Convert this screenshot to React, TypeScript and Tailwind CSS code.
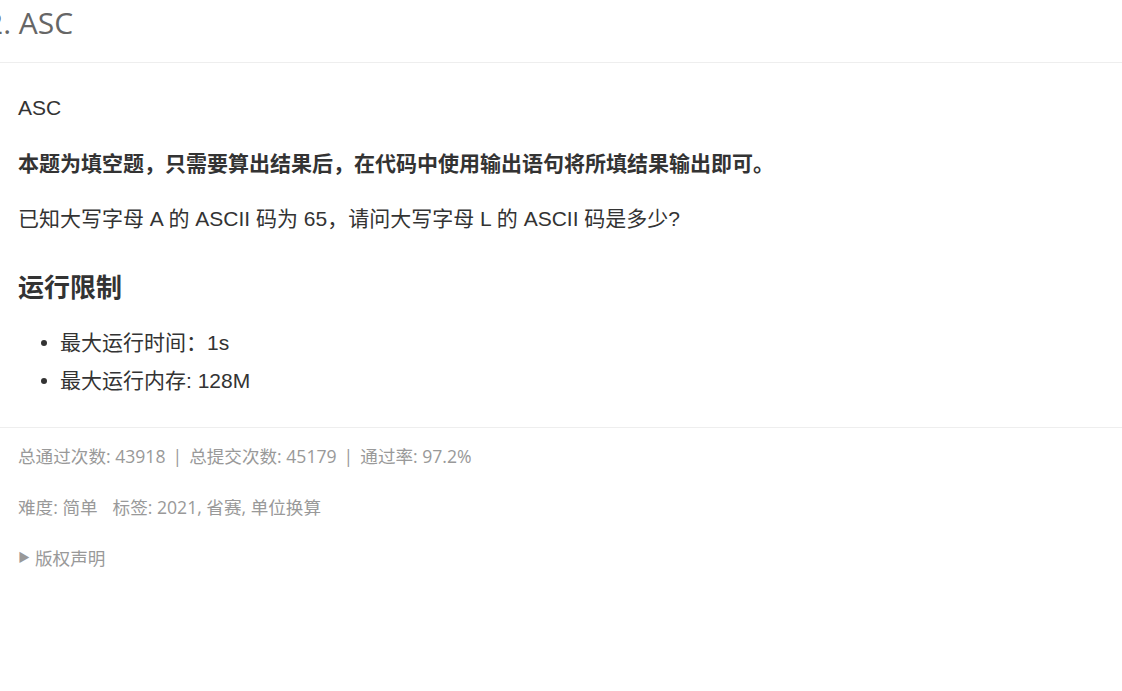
const body = { fontFamily: '"Liberation Sans", "Noto Sans CJK SC", sans-serif' };
const light = { fontFamily: '"Open Sans", "Noto Sans CJK SC", sans-serif' };

const limits = ['最大运行时间：1s', '最大运行内存: 128M'];

const Sep = () => <span className="mx-[7px]">|</span>;

export default function App() {
  return (
    <div className="w-[1122px] h-[691px] bg-white overflow-hidden text-[#333]" style={body}>
      <header className="h-[63px] border-b border-[#eee]">
        <h1 className="ml-[-14px] text-[30px] leading-[46px] text-[#666] whitespace-nowrap" style={light}>
          2. ASC
        </h1>
      </header>

      <section className="pl-[18px] text-[21px]">
        <p className="pt-[25px] leading-[40px]">ASC</p>
        <p className="mt-[16px] leading-[40px] font-bold">
          本题为填空题，只需要算出结果后，在代码中使用输出语句将所填结果输出即可。
        </p>
        <p className="mt-[15px] leading-[40px]">
          已知大写字母 A 的 ASCII 码为 65，请问大写字母 L 的 ASCII 码是多少?
        </p>
        <h2 className="mt-[29px] leading-[40px] text-[26px] font-bold">运行限制</h2>
        <ul className="mt-[16px]">
          {limits.map((item) => (
            <li key={item} className="flex items-center h-[38px]">
              <span className="ml-[23px] mr-[13px] w-[6px] h-[6px] rounded-full bg-[#333]" />
              <span className="leading-[38px]">{item}</span>
            </li>
          ))}
        </ul>
      </section>

      <footer className="mt-[27px] border-t border-[#eee] pl-[18px] text-[17.6px] text-[#999]" style={light}>
        <p className="mt-[13px] leading-[30px] whitespace-nowrap">
          总通过次数: 43918<Sep />总提交次数: 45179<Sep />通过率: 97.2%
        </p>
        <p className="mt-[21px] leading-[30px] whitespace-nowrap">
          难度: 简单<span className="ml-[15px]">标签: 2021, 省赛, 单位换算</span>
        </p>
        <p className="mt-[21px] leading-[30px] flex items-center">
          <span className="text-[12px] mr-[5px]">▶</span>
          版权声明
        </p>
      </footer>
    </div>
  );
}
